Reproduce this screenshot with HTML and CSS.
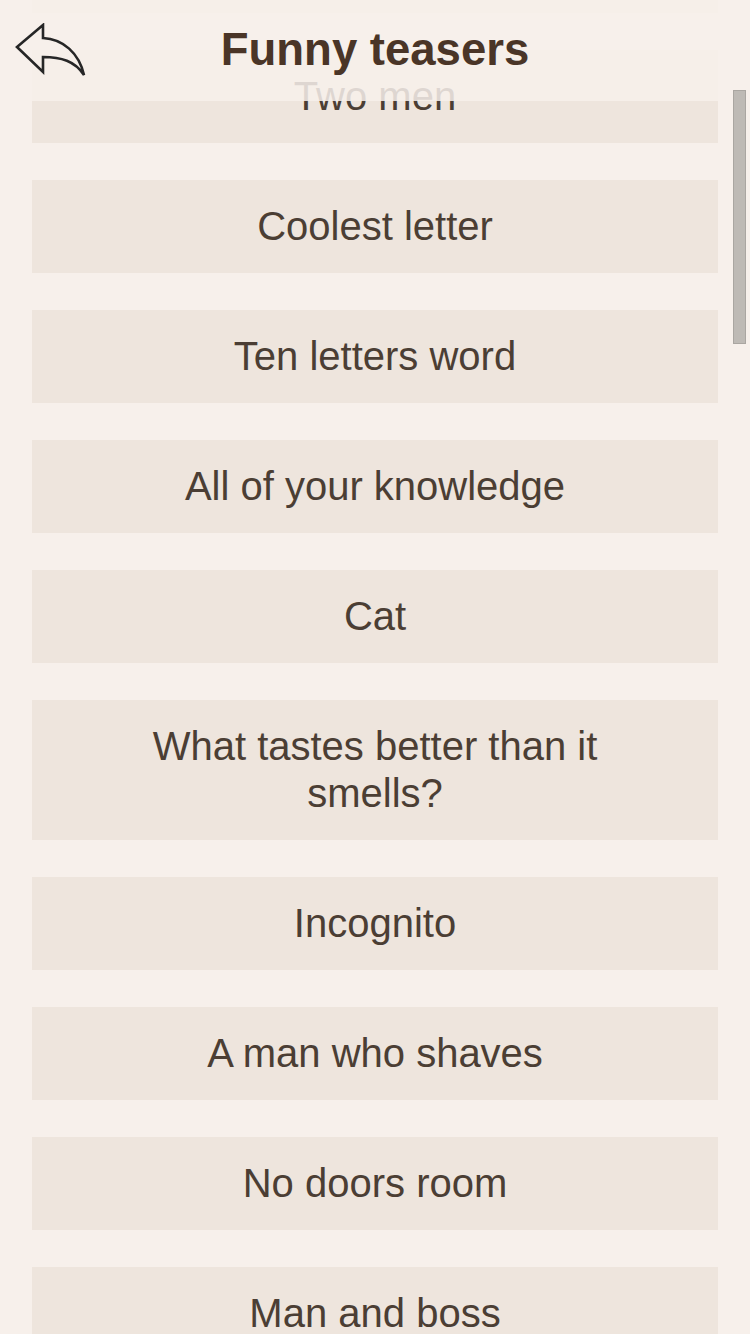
FILE: index.html
```html
<!DOCTYPE html>
<html lang="en">
<head>
<meta charset="utf-8">
<title>Funny teasers</title>
<link rel="stylesheet" href="styles.css">
</head>
<body>
<div class="screen">
  <header class="topbar">
    <button class="back" aria-label="Back">
      <svg width="74" height="58" viewBox="0 0 74 58">
        <path d="M3 24 L29 2 L29 15 C49 16 65 30 70 52 C61 38 47 34 29 34 L29 49 Z" fill="none" stroke="#262626" stroke-width="2.6" stroke-linejoin="miter"/>
      </svg>
    </button>
    <h1 class="title">Funny teasers</h1>
  </header>

  <main class="list">
    <div class="card card-hidden"></div>
    <div class="card">Two men</div>
    <div class="card">Coolest letter</div>
    <div class="card">Ten letters word</div>
    <div class="card">All of your knowledge</div>
    <div class="card">Cat</div>
    <div class="card">What tastes better than it smells?</div>
    <div class="card">Incognito</div>
    <div class="card">A man who shaves</div>
    <div class="card">No doors room</div>
    <div class="card">Man and boss</div>
  </main>

  <div class="scrollbar"></div>
</div>
</body>
</html>
```
FILE: styles.css
```css
html, body {
  margin: 0;
  padding: 0;
  background: #f7f0eb;
}

body {
  width: 750px;
  height: 1334px;
  overflow: hidden;
  font-family: "Liberation Sans", Arial, sans-serif;
}

.screen {
  position: relative;
  width: 750px;
  height: 1334px;
  overflow: hidden;
}

.topbar {
  position: absolute;
  top: 0;
  left: 0;
  right: 0;
  height: 101px;
  background: rgba(247, 240, 235, 0.86);
  display: flex;
  align-items: center;
  justify-content: center;
  z-index: 2;
}

.back {
  position: absolute;
  left: 14px;
  top: 23px;
  width: 74px;
  height: 58px;
  padding: 0;
  border: 0;
  background: none;
  display: flex;
}

.title {
  margin: 0 0 2px 0;
  font-size: 45.5px;
  font-weight: bold;
  color: #4a3527;
}

.list {
  margin-top: -80px;
  padding: 0 32px;
  display: flex;
  flex-direction: column;
  gap: 37px;
}

.card {
  background: #eee5dd;
  color: #4b3e34;
  font-size: 40px;
  line-height: 47px;
  text-align: center;
  padding: 23px 60px;
}

.card-hidden {
  min-height: 47px;
}

.scrollbar {
  position: absolute;
  top: 90px;
  left: 733px;
  width: 11px;
  height: 252px;
  background: #bebab5;
  border: 1px solid #aaa6a1;
  z-index: 3;
}
```
